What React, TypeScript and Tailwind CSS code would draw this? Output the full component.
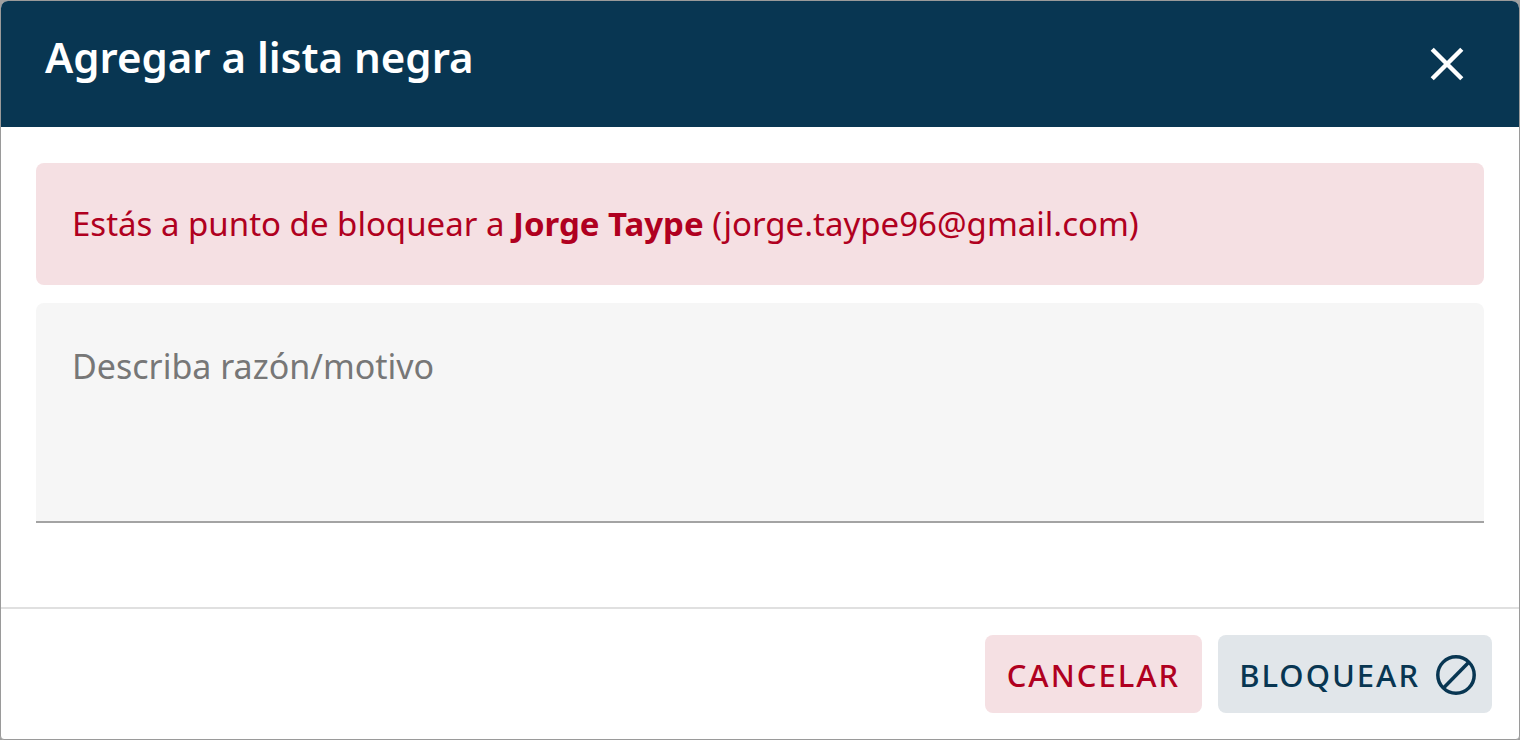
import { useState } from "react";

const user = {
  name: "Jorge Taype",
  email: "jorge.taype96@gmail.com",
};

const CloseIcon = () => (
  <svg viewBox="0 0 34 34" className="h-[34px] w-[34px]" fill="none" stroke="currentColor" strokeWidth="4.4" aria-hidden="true">
    <path d="M2.2 2.2l29.6 29.6M31.8 2.2l-29.6 29.6" />
  </svg>
);

const BlockIcon = () => (
  <svg viewBox="0 0 40 40" className="h-10 w-10" fill="none" stroke="currentColor" strokeWidth="3.5" aria-hidden="true">
    <circle cx="20" cy="20" r="18.2" />
    <path d="M7.5 33L32.5 7.5" />
  </svg>
);

const App = () => {
  const [reason, setReason] = useState("");

  return (
    <div className="bg-[#a0a0a0] font-['Noto_Sans',sans-serif]">
      <section
        role="dialog"
        aria-labelledby="dialog-title"
        className="flex min-h-screen flex-col overflow-hidden rounded-lg rounded-b-sm border border-[#9a9a9a] bg-white"
      >
        <header className="flex items-start justify-between bg-[#083652] pb-[42px] pl-11 pr-[55px] pt-7 text-white">
          <h2 id="dialog-title" className="text-[42px] font-semibold leading-[56px]">
            Agregar a lista negra
          </h2>
          <button type="button" aria-label="Cerrar" className="mt-[18px]">
            <CloseIcon />
          </button>
        </header>

        <div className="flex flex-1 flex-col gap-[18px] px-[35px] pt-9">
          <p className="rounded-lg bg-[#f5e0e3] px-9 py-9 text-[33px] leading-[50px] text-[#b00020]">
            Estás a punto de bloquear a <strong className="font-bold">{user.name}</strong> ({user.email})
          </p>
          <textarea
            aria-label="Describa razón/motivo"
            placeholder="Describa razón/motivo"
            value={reason}
            onChange={(e) => setReason(e.target.value)}
            className="block h-[220px] w-full resize-none rounded-t-lg border-b-2 border-[#a3a3a3] bg-[#f6f6f6] px-9 py-9 text-[34px] leading-[54px] outline-none placeholder:text-[#777777]"
          />
        </div>

        <footer className="flex justify-end gap-4 border-t-2 border-[#e0e0e0] px-[27px] py-[26px] text-[31px] font-medium">
          <button type="button" className="h-[78px] rounded-lg bg-[#f5e0e3] px-[22px] pt-[2px] tracking-[2px] text-[#b00020]">
            CANCELAR
          </button>
          <button
            type="button"
            className="flex h-[78px] items-center gap-4 rounded-lg bg-[#e1e6ea] pl-[21px] pr-4 pt-[2px] tracking-[2px] text-[#083652]"
          >
            BLOQUEAR
            <BlockIcon />
          </button>
        </footer>
      </section>
    </div>
  );
};

export default App;
